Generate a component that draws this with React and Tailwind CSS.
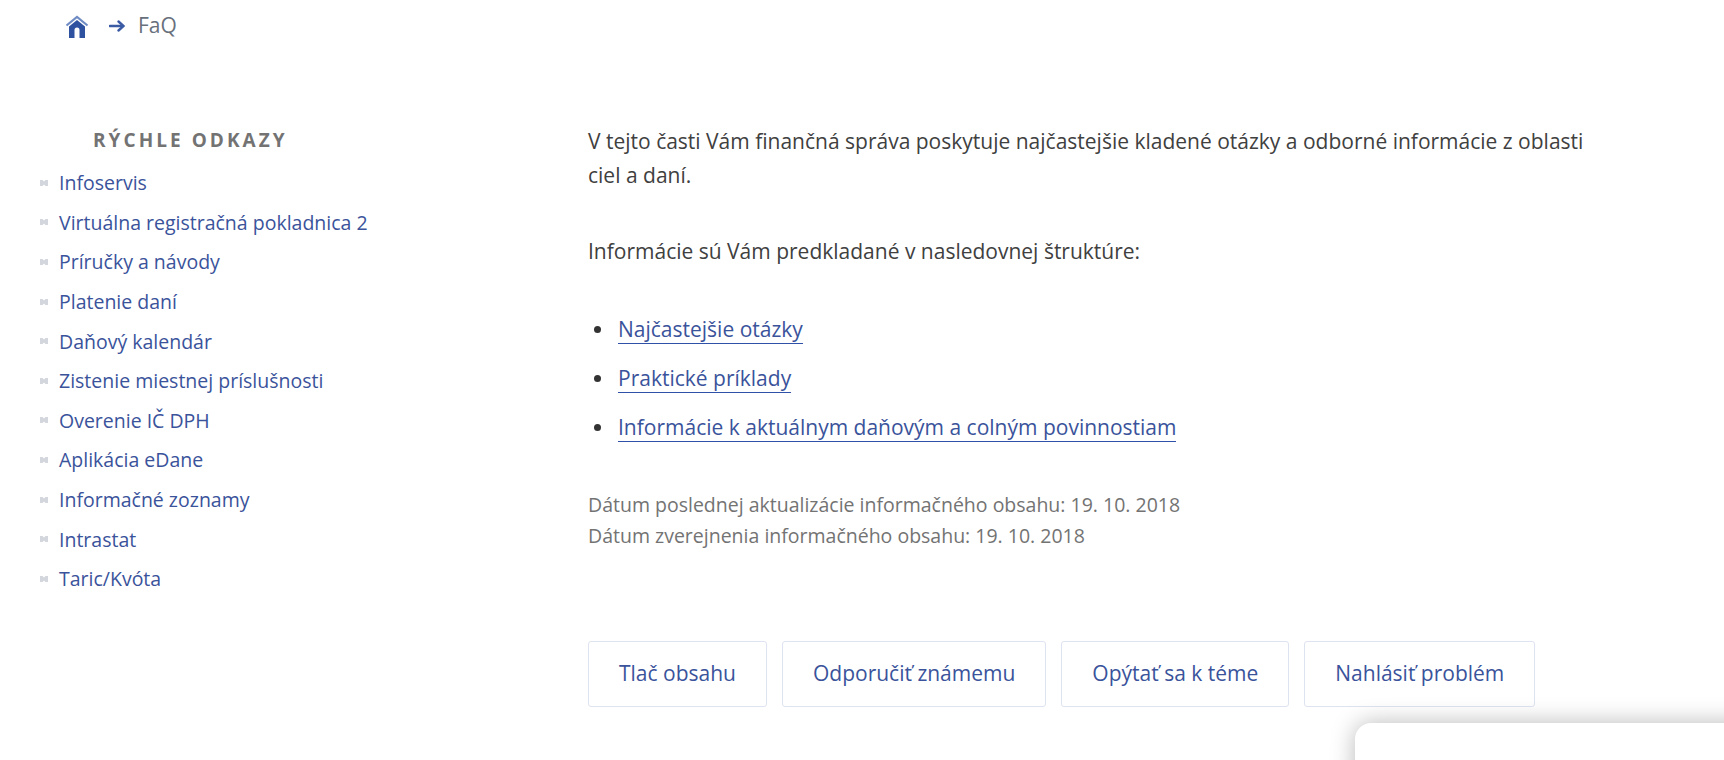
import React from 'react';

const quickLinks = [
  'Infoservis',
  'Virtuálna registračná pokladnica 2',
  'Príručky a návody',
  'Platenie daní',
  'Daňový kalendár',
  'Zistenie miestnej príslušnosti',
  'Overenie IČ DPH',
  'Aplikácia eDane',
  'Informačné zoznamy',
  'Intrastat',
  'Taric/Kvóta',
];

const faqLinks = [
  'Najčastejšie otázky',
  'Praktické príklady',
  'Informácie k aktuálnym daňovým a colným povinnostiam',
];

const actions = ['Tlač obsahu', 'Odporučiť známemu', 'Opýtať sa k téme', 'Nahlásiť problém'];

function HomeIcon() {
  return (
    <svg width="24" height="24" viewBox="0 0 24 24" className="text-[#2f52a0]">
      <path d="M1.500 11.500 12 3l10.500 8.500" fill="none" stroke="#6f8cc4" strokeWidth="2.200" />
      <path d="M4 12.500 12 6l8 6.500V24h-5.500v-8a2.500 2.500 0 0 0-5 0v8H4z" fill="currentColor" />
    </svg>
  );
}

function ArrowIcon() {
  return (
    <svg width="16" height="12" viewBox="0 0 16 12" className="text-[#3b5ba5]">
      <path d="M1 6h12.500" fill="none" stroke="currentColor" strokeWidth="2.600" strokeLinecap="round" />
      <path d="M9.500 1.500 14.500 6l-5 4.500" fill="none" stroke="currentColor" strokeWidth="2.400" strokeLinecap="round" />
    </svg>
  );
}

function LinkMark() {
  return (
    <svg width="8" height="6" viewBox="0 0 8 6" className="shrink-0 text-[#d3d6dc]">
      <path d="M0 0h2.500l1.500 1.500L5.500 0H8v6H5.500L4 4.500 2.500 6H0z" fill="currentColor" />
    </svg>
  );
}

export default function App() {
  return (
    <div className="relative h-[760px] w-[1724px] overflow-hidden bg-white font-['Open_Sans',sans-serif] text-[#404040]">
      <nav className="flex h-[52px] items-center pl-[65px]">
        <HomeIcon />
        <span className="ml-[20px]"><ArrowIcon /></span>
        <span className="ml-[13px] text-[21px] text-[#68707c]">FaQ</span>
      </nav>

      <div className="flex pt-[74px]">
        <aside className="w-[588px] shrink-0 pl-[40px]">
          <h2 className="pl-[53px] text-[19px] leading-[28px] font-bold tracking-[0.16em] text-[#737373]">RÝCHLE ODKAZY</h2>
          <ul className="mt-[9px] flex flex-col">
            {quickLinks.map((link) => (
              <li key={link} className="flex h-[39.6px] items-center gap-[11px] text-[19.500px] text-[#3a539b]">
                <LinkMark />
                {link}
              </li>
            ))}
          </ul>
        </aside>

        <main className="w-[1020px] -mt-[2px]">
          <p className="text-[21px] leading-[34px] text-[#404040]">
            V tejto časti Vám finančná správa poskytuje najčastejšie kladené otázky a odborné informácie z oblasti ciel a daní.
          </p>
          <p className="mt-[42px] text-[21px] leading-[34px]">Informácie sú Vám predkladané v nasledovnej štruktúre:</p>
          <ul className="mt-[44px] flex flex-col gap-[14.900px] pl-[30px]">
            {faqLinks.map((link) => (
              <li key={link} className="relative h-[34px] text-[21px] leading-[34px]">
                <span className="absolute top-[14px] left-[-24px] h-[7px] w-[7px] rounded-full bg-[#333333]" />
                <a href="#" className="inline-block border-b-[1.500px] border-[#2f52a8] leading-[27px] text-[#3a539b]">{link}</a>
              </li>
            ))}
          </ul>
          <div className="mt-[45px] text-[19.500px] leading-[31px] text-[#737373]">
            <p>Dátum poslednej aktualizácie informačného obsahu: 19. 10. 2018</p>
            <p>Dátum zverejnenia informačného obsahu: 19. 10. 2018</p>
          </div>
          <div className="mt-[90px] flex gap-[15px]">
            {actions.map((label) => (
              <button key={label} className="h-[66px] rounded-[3px] border border-[#dde3f0] bg-white px-[30px] text-[21px] text-[#3a539b]">
                {label}
              </button>
            ))}
          </div>
        </main>
      </div>

      <div className="absolute top-[723px] left-[1355px] h-[200px] w-[500px] rounded-[16px] bg-white shadow-[0_0_24px_rgba(0,0,0,0.28)]" />
    </div>
  );
}
